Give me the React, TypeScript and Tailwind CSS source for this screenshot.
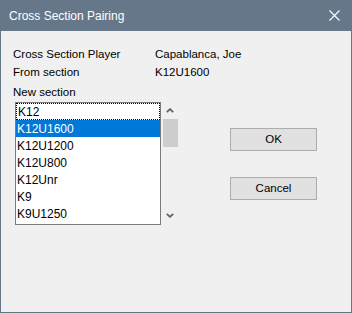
import React from "react";

const items = ["K12", "K12U1600", "K12U1200", "K12U800", "K12Unr", "K9", "K9U1250"];

export default function App() {
  const font = { fontFamily: '"Liberation Sans", Arial, sans-serif' };
  return (
    <div className="w-[352px] h-[313px] bg-[#67778a] flex flex-col p-px pt-0" style={font}>
      <div className="h-[31px] flex items-center justify-between text-white text-[12px] pl-[8px] pr-[10px]">
        <span className="leading-none">Cross Section Pairing</span>
        <svg width="11" height="11" viewBox="0 0 11 11" className="mr-[1px]">
          <path d="M0.5 0.5 L10.5 10.5 M10.5 0.5 L0.5 10.5" stroke="white" strokeWidth="1.1" />
        </svg>
      </div>
      <div className="flex-1 bg-[#f0f0f0] text-black pt-[15px] pl-[12px]">
        <div className="flex h-[18px] items-center text-[11.5px]">
          <span className="w-[142px]">Cross Section Player</span>
          <span>Capablanca, Joe</span>
        </div>
        <div className="flex h-[18px] items-center text-[11.5px]">
          <span className="w-[142px]">From section</span>
          <span>K12U1600</span>
        </div>
        <div className="flex h-[18px] items-center text-[11.5px] mt-[2px]">
          <span>New section</span>
        </div>
        <div className="flex">
          <div className="ml-[2px] w-[146px] h-[123px] border border-[#7a7a7a] bg-white overflow-hidden text-[12px]">
            {items.map((it, i) => (
              <div
                key={it}
                className={
                  "h-[17px] pl-[1px] flex items-center leading-none " +
                  (i === 1 ? "bg-[#0078d7] text-white " : "") +
                  (i === 0 ? "border border-dotted border-black pl-0" : "")
                }
              >
                {it}
              </div>
            ))}
          </div>
          <div className="w-[16px] ml-[1px] h-[123px] flex flex-col items-center">
            <div className="h-[17px] flex items-center justify-center">
              <svg width="8" height="5" viewBox="0 0 8 5">
                <path d="M0.8 4.2 L4 1.2 L7.2 4.2" fill="none" stroke="#606060" strokeWidth="1.8" />
              </svg>
            </div>
            <div className="w-[15px] h-[28px] bg-[#cdcdcd]" />
            <div className="flex-1" />
            <div className="h-[17px] flex items-center justify-center mb-[1px]">
              <svg width="8" height="5" viewBox="0 0 8 5">
                <path d="M0.8 0.8 L4 3.8 L7.2 0.8" fill="none" stroke="#606060" strokeWidth="1.8" />
              </svg>
            </div>
          </div>
          <div className="ml-[52px] mt-[26px] flex flex-col gap-[26px]">
            <button className="w-[87px] h-[23px] bg-[#e1e1e1] border border-[#adadad] text-[11.5px] flex items-center justify-center">
              OK
            </button>
            <button className="w-[87px] h-[23px] bg-[#e1e1e1] border border-[#adadad] text-[11.5px] flex items-center justify-center">
              Cancel
            </button>
          </div>
        </div>
      </div>
    </div>
  );
}
